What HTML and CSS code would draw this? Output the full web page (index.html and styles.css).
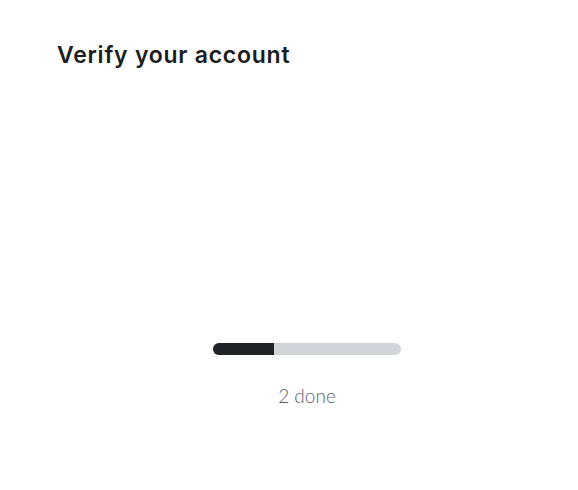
FILE: index.html
```html
<!DOCTYPE html>
<html>
<head>
<meta charset="utf-8">
<link rel="stylesheet" href="styles.css">
</head>
<body>
<div class="page">
  <h1 class="title">Verify your account</h1>
  <div class="status">
    <div class="track"><div class="fill" style="width: 32.5%"></div></div>
    <div class="label">2 done</div>
  </div>
</div>
</body>
</html>
```
FILE: styles.css
```css
html, body { margin: 0; padding: 0; background: #fff; }
.page {
  width: 500px;
  padding: 40px 0 0 57px;
  box-sizing: content-box;
}
.title {
  margin: 0;
  font-family: Inter, "Liberation Sans", sans-serif;
  font-weight: 600;
  font-size: 23px;
  line-height: 30px;
  color: #1c1d20;
  letter-spacing: 0.75px;
}
.status {
  display: flex;
  flex-direction: column;
  align-items: center;
  margin-top: 273px;
}
.track {
  width: 188px;
  height: 12px;
  border-radius: 6px;
  background: #d1d5db;
  overflow: hidden;
}
.fill {
  height: 100%;
  background: #1f2227;
}
.label {
  margin-top: 29px;
  font-family: Lato, "Open Sans", sans-serif;
  font-weight: 300;
  font-size: 19px;
  line-height: 24px;
  color: #5b5f6c;
}
```
